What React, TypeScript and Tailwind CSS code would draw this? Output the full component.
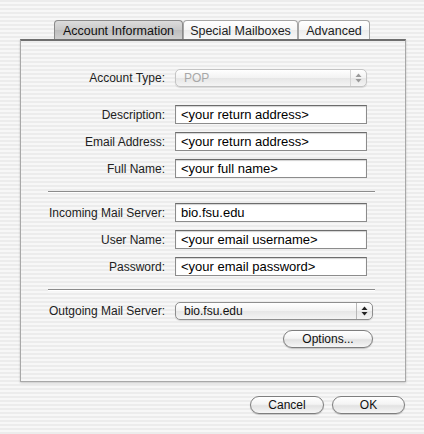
const stripes =
  "bg-[repeating-linear-gradient(180deg,#ececec_0px,#ececec_2px,#f7f7f7_2px,#f7f7f7_4px)]";

const Arrows = ({ dim }: { dim?: boolean }) => (
  <svg width="7" height="10" viewBox="0 0 7 10">
    <path d="M3.5 0.5 L6.5 4 L0.5 4 Z" fill={dim ? "#9a9a9a" : "#222"} />
    <path d="M3.5 9.5 L6.5 6 L0.5 6 Z" fill={dim ? "#9a9a9a" : "#222"} />
  </svg>
);

const Popup = ({ value, dim, width }: { value: string; dim?: boolean; width: string }) => (
  <div
    className={`${width} h-[18px] flex items-center rounded-[5px] border ${
      dim ? "border-[#c4c4c4] text-[#a8a8a8]" : "border-[#8e8e8e] text-[#111]"
    } bg-[linear-gradient(180deg,#ffffff,#f2f2f2_50%,#e6e6e6_51%,#f4f4f4)] shadow-[0_1px_1px_rgba(0,0,0,0.12)]`}
  >
    <span className="flex-1 pl-[8px] text-[12px] leading-none">{value}</span>
    <span
      className={`w-[16px] h-full flex items-center justify-center border-l ${
        dim ? "border-[#d4d4d4]" : "border-[#b8b8b8]"
      }`}
    >
      <Arrows dim={dim} />
    </span>
  </div>
);

const Field = ({ label, value }: { label: string; value: string }) => (
  <div className="flex items-center h-[19px]">
    <div className="w-[145px] text-right text-[12px] text-[#222] pr-[1px]">{label}</div>
    <div className="ml-[9px] w-[192px] h-[19px] bg-white border border-[#8c8c8c] border-t-[#6c6c6c] shadow-[inset_0_1px_1px_rgba(0,0,0,0.18)] flex items-center pl-[5px] pb-px text-[13px] text-black leading-none">
      {value}
    </div>
  </div>
);

const Button = ({ label, width }: { label: string; width: string }) => (
  <div
    className={`${width} h-[18px] rounded-full border border-[#7e7e7e] bg-[linear-gradient(180deg,#ffffff,#f4f4f4_45%,#e2e2e2_55%,#f6f6f6)] shadow-[0_1px_1px_rgba(0,0,0,0.2)] flex items-center justify-center text-[12px] text-[#111] leading-none`}
  >
    {label}
  </div>
);

const Tab = ({ label, width, active }: { label: string; width: string; active?: boolean }) => (
  <div
    className={`${width} h-[19px] pt-[2px] flex items-center justify-center text-[12.5px] leading-none border border-b-0 rounded-t-[4px] ${
      active
        ? "border-[#8a8a8a] bg-[linear-gradient(180deg,#dcdcdc,#c9c9c9_50%,#bdbdbd_51%,#cfcfcf)] text-[#111]"
        : "border-[#a6a6a6] bg-[linear-gradient(180deg,#ffffff,#f6f6f6_50%,#ececec_51%,#f8f8f8)] text-[#222]"
    }`}
  >
    {label}
  </div>
);

const Separator = ({ mt }: { mt: string }) => (
  <div className={`${mt} ml-[27px] w-[327px] h-px bg-[#8c8c8c] shadow-[0_1px_0_#ffffff]`} />
);

export default function App() {
  return (
    <div
      className={`w-[424px] h-[434px] ${stripes} font-['Liberation_Sans',Arial,sans-serif] overflow-hidden`}
    >
      <div className="pt-[20px] pl-[54px] flex">
        <Tab label="Account Information" width="w-[129px]" active />
        <Tab label="Special Mailboxes" width="w-[115px]" />
        <Tab label="Advanced" width="w-[72px]" />
      </div>
      <div
        className={`ml-[20px] w-[386px] h-[343px] ${stripes} border border-[#a8a8a8] border-t-[#6e6e6e] border-t-2 shadow-[0_1px_2px_rgba(0,0,0,0.2)] flex flex-col`}
      >
        <div className="mt-[28px] flex items-center h-[18px]">
          <div className="w-[145px] text-right text-[12px] text-[#222] pr-[1px]">Account Type:</div>
          <div className="ml-[9px]">
            <Popup value="POP" dim width="w-[192px]" />
          </div>
        </div>
        <div className="mt-[18px] flex flex-col gap-[8px]">
          <Field label="Description:" value="<your return address>" />
          <Field label="Email Address:" value="<your return address>" />
          <Field label="Full Name:" value="<your full name>" />
        </div>
        <Separator mt="mt-[13px]" />
        <div className="mt-[11px] flex flex-col gap-[8px]">
          <Field label="Incoming Mail Server:" value="bio.fsu.edu" />
          <Field label="User Name:" value="<your email username>" />
          <Field label="Password:" value="<your email password>" />
        </div>
        <Separator mt="mt-[13px]" />
        <div className="mt-[12px] flex items-center h-[18px]">
          <div className="w-[145px] text-right text-[12px] text-[#222] pr-[1px]">Outgoing Mail Server:</div>
          <div className="ml-[9px]">
            <Popup value="bio.fsu.edu" width="w-[198px]" />
          </div>
        </div>
        <div className="mt-[10px] flex justify-end pr-[32px]">
          <Button label="Options..." width="w-[90px]" />
        </div>
      </div>
      <div className="mt-[14px] flex justify-end gap-[8px] pr-[19px]">
        <Button label="Cancel" width="w-[74px]" />
        <Button label="OK" width="w-[73px]" />
      </div>
    </div>
  );
}
